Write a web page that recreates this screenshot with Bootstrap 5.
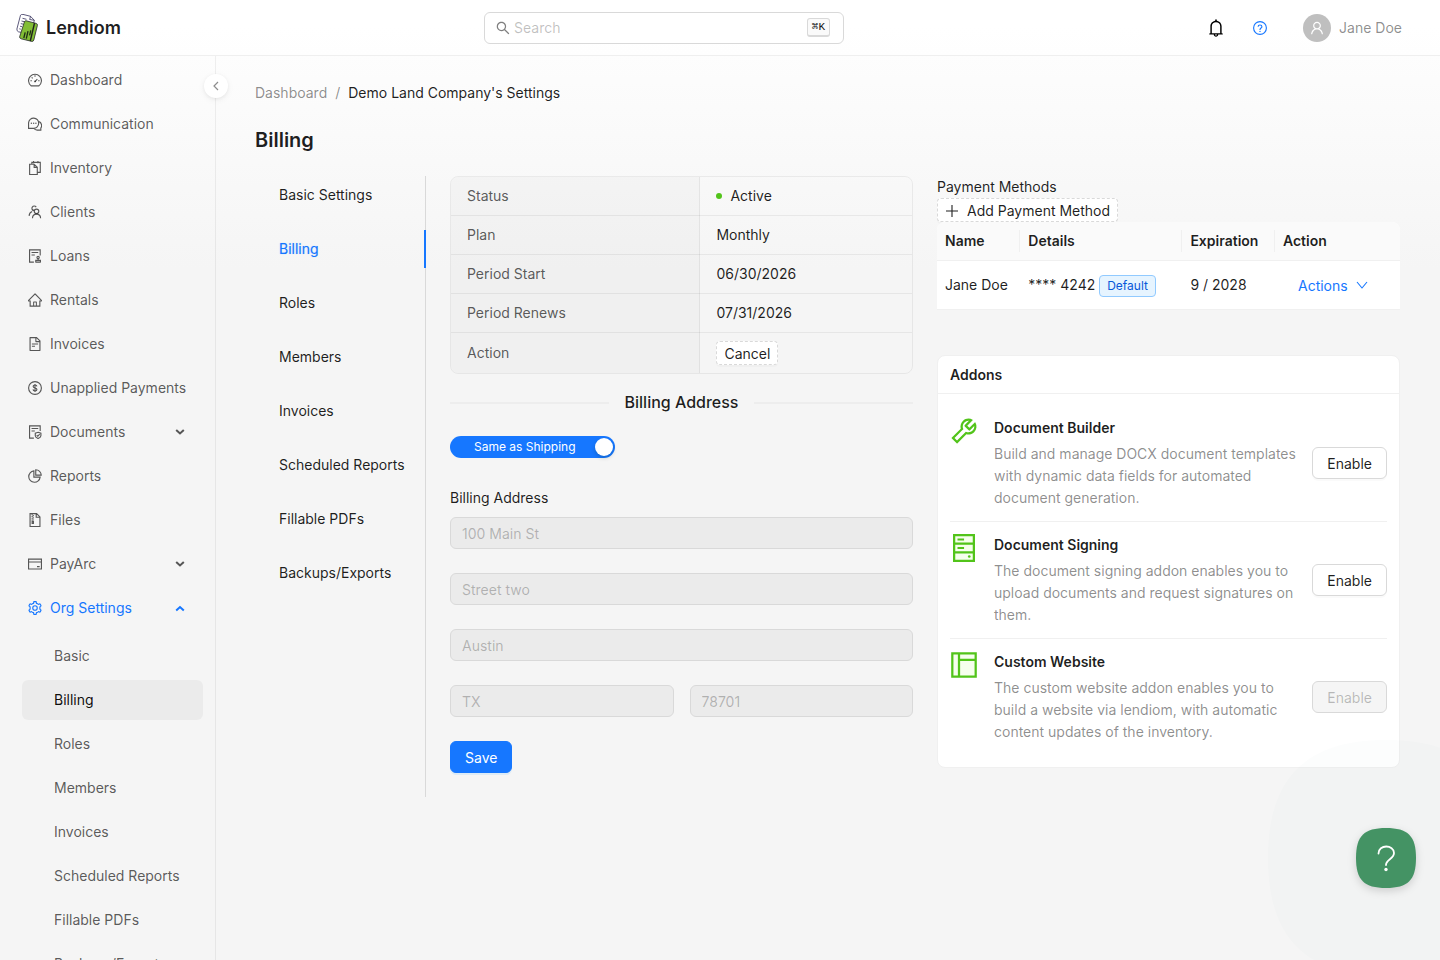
<!DOCTYPE html>
<html lang="en">
<head>
<meta charset="utf-8">
<meta name="viewport" content="width=device-width, initial-scale=1">
<title>Billing - Lendiom</title>
<link href="https://cdn.jsdelivr.net/npm/bootstrap@5.3.0/dist/css/bootstrap.min.css" rel="stylesheet">
<style>
  :root { --ink: rgba(0,0,0,.88); --ink-2: rgba(0,0,0,.65); --ink-3: rgba(0,0,0,.45); --ink-4: rgba(0,0,0,.25); --blue: #1677ff; --green: #52c41a; --line: rgba(5,5,5,.06); }
  body { font-family: Inter, "Liberation Sans", sans-serif; font-size: 14px; line-height: 22px; color: var(--ink); background: linear-gradient(#fff, #f5f5f5 28%); }
  a { text-decoration: none; color: inherit; }
  .ico { width: 14px; height: 14px; fill: currentColor; flex: none; display: block; }
  .ico-lg { width: 18px; height: 18px; }
  .ico-md { width: 12px; height: 12px; }
  .ico-sm { width: 10px; height: 10px; }
  .ln { fill: none; stroke: currentColor; stroke-width: 72; }
  .topbar { height: 56px; padding: 0 38px 0 16px; border-bottom: 1px solid var(--line); background: rgba(255,255,255,.6); }
  .brand { font-size: 18px; font-weight: 600; line-height: 28px; }
  .searchbox { width: 360px; height: 32px; padding: 0 13px 0 11px; background: #fff; border: 1px solid #d9d9d9; border-radius: 6px; }
  .searchbox .ico { color: rgba(0,0,0,.5); }
  .searchbox input { border: 0; outline: 0; background: none; min-width: 0; }
  .searchbox input::placeholder { color: var(--ink-4); }
  .keys { font: 400 11px/16px "Liberation Mono", "DejaVu Sans Mono", monospace; color: #111; background: #fafafa; border: 1px solid #d9d9d9; border-bottom-width: 2px; border-radius: 3px; padding: 0 4px; }
  .iconbtn { border: 0; background: none; padding: 0; }
  .help { color: var(--blue); }
  .who { color: var(--ink-3); }
  .avatar { width: 28px; height: 28px; background: #bfbfbf; color: #fff; }
  .shell { min-height: 0; }
  .side { width: 215px; }
  .collapser { right: -13px; top: 18px; width: 24px; height: 24px; background: #fff; color: var(--ink-3); box-shadow: 0 2px 8px -2px rgba(0,0,0,.1), 0 1px 4px -1px rgba(25,15,15,.08); }
  .menu { padding-top: 4px; color: var(--ink-2); white-space: nowrap; }
  .menu-row { height: 40px; margin-bottom: 4px; padding: 0 30px 0 28px; }
  .menu-row.on { color: var(--blue); }
  .submenu { padding-top: 4px; }
  .submenu a { height: 40px; line-height: 40px; margin: 0 12px 4px 22px; padding-left: 32px; border-radius: 6px; }
  .submenu a.on { background: rgba(0,0,0,.04); color: rgba(0,0,0,.95); }
  .page { border-left: 1px solid var(--line); padding: 26px 40px 24px 39px; }
  .crumbs { color: var(--ink-3); }
  .crumbs [aria-current] { color: var(--ink); }
  .title { font-size: 20px; line-height: 32px; font-weight: 600; margin: 20px 0; }
  .tabs { width: 171px; border-right: 1px solid #d9d9d9; gap: 16px; }
  .tabs a { padding: 8px 0 8px 24px; white-space: nowrap; }
  .tabs a.on { color: var(--blue); text-shadow: 0 0 1px rgba(22,119,255,.4); margin-right: -1px; border-right: 2px solid var(--blue); }
  .pair { display: grid; grid-template-columns: 1fr 1fr; gap: 24px; }
  .frame { border: 1px solid var(--line); border-radius: 8px; overflow: hidden; }
  .facts, .pay { --bs-table-bg: transparent; color: var(--ink); border-color: var(--line); margin: 0; }
  .facts > tbody > tr > * { padding: 8px 16px; }
  .facts > tbody > tr:last-child > * { border-bottom: 0; }
  .facts > tbody > tr > th { width: 54%; font-weight: 400; color: var(--ink-2); background: rgba(0,0,0,.02); border-right: 1px solid var(--line); }
  .dot { width: 6px; height: 6px; background: var(--green); }
  .bt { font-size: 14px; line-height: 22px; height: 32px; padding: 5px 14px 3px; border: 1px solid #d9d9d9; border-radius: 6px; background: #fff; color: var(--ink); box-shadow: 0 2px 0 rgba(0,0,0,.02); }
  .bt:disabled { background: rgba(0,0,0,.04); color: var(--ink-4); border-color: #d9d9d9; opacity: 1; box-shadow: none; }
  .bt-dash { height: 24px; padding: 1px 7px 0; border-style: dashed; border-radius: 4px; }
  .bt-main { background: var(--blue); border-color: var(--blue); color: #fff; box-shadow: 0 2px 0 rgba(5,145,255,.1); }
  .bt-link { background: none; border-color: transparent; color: var(--blue); box-shadow: none; }
  .split { margin: 16px 0; font-size: 16px; font-weight: 500; line-height: 24px; }
  .split::before, .split::after { content: ""; flex: 1; border-top: 2px solid rgba(5,5,5,.03); margin-top: 2px; }
  .switch { width: fit-content; height: 22px; padding: 0 2px 0 24px; gap: 19px; font-size: 12px; background: var(--blue); color: #fff; cursor: pointer; margin: 22px 0 29px; }
  .switch input { appearance: none; width: 18px; height: 18px; margin: 0; border-radius: 50%; background: #fff; box-shadow: 0 2px 4px rgba(0,35,11,.2); }
  .field { height: 32px; padding: 4px 11px; font-size: 14px; line-height: 22px; border: 1px solid #d9d9d9; border-radius: 6px; }
  .field:disabled { background: rgba(0,0,0,.04); }
  .field::placeholder { color: var(--ink-4); }
  .pay { background: #fff; border-color: #f0f0f0; table-layout: fixed; }
  .pay thead { background: #fafafa; }
  .pay thead th { font-weight: 600; position: relative; }
  .pay thead th:not(:last-child)::after { content: ""; position: absolute; right: 0; top: 8px; height: 22px; width: 1px; background: #f0f0f0; }
  .pay tr > * { padding: 8px; vertical-align: middle; }
  .c-name { width: 18%; } .c-details { width: 35%; } .c-exp { width: 20%; }
  .paywrap { border-radius: 8px 8px 0 0; overflow: hidden; margin-bottom: 45px; }
  .tagd { font-size: 12px; line-height: 20px; padding: 0 7px; border: 1px solid #91caff; border-radius: 4px; background: #e6f4ff; color: #0958d9; display: inline-block; }
  .panel { background: #fff; border: 1px solid #f0f0f0; border-radius: 8px; }
  .panel-head { height: 38px; line-height: 38px; padding: 0 12px; font-size: 14px; font-weight: 600; border-bottom: 1px solid #f0f0f0; margin: 0; }
  .panel-list { padding: 11px 12px 12px; margin: 0; }
  .addon { padding: 12px 0; border-bottom: 1px solid #f0f0f0; }
  .addon:last-child { border-bottom: 0; }
  .addon h3 { font-size: 14px; line-height: 22px; font-weight: 600; margin: 0 0 4px; }
  .addon p { color: var(--ink-3); margin: 0; }
  .addon svg { width: 28px; height: 28px; fill: var(--green); flex: none; align-self: flex-start; }
  .addon .duo { fill: #f6ffed; stroke: var(--green); stroke-width: 72; }
  .helper { right: 24px; bottom: 72px; width: 60px; height: 60px; border: 0; background: none; padding: 0; }
  .helper svg { width: 60px; height: 60px; overflow: visible; display: block; }
  .helper .blob { filter: drop-shadow(0 3px 4px rgba(0,0,0,.15)); }
</style>
</head>
<body class="vh-100 d-flex flex-column overflow-hidden">
<svg width="0" height="0" class="position-absolute" aria-hidden="true">
  <symbol id="chev" viewBox="0 0 10 10"><path d="M1.200 3L5 6.500 8.800 3" fill="none" stroke="currentColor" stroke-width="2"/></symbol>
  <symbol id="person" viewBox="64 64 896 896"><path d="M858.500 763.600a374 374 0 00-80.600-119.500 375.630 375.630 0 00-119.500-80.600c-.4-.2-.8-.3-1.200-.5C719.500 518 760 444.700 760 362c0-137-111-248-248-248S264 225 264 362c0 82.700 40.500 156 102.800 201.100-.4.2-.8.3-1.200.5-44.800 18.900-85 46-119.500 80.600a375.630 375.630 0 00-80.600 119.500A371.700 371.700 0 00136 901.800a8 8 0 008 8.200h60c4.400 0 7.900-3.500 8-7.800 2-77.200 33-149.500 87.800-204.300 56.700-56.700 132-87.900 212.200-87.900s155.500 31.200 212.200 87.900C779 752.700 810 825 812 902.200c.1 4.400 3.600 7.800 8 7.800h60a8 8 0 008-8.200c-1-47.800-10.900-94.300-29.500-138.200zM512 534c-45.900 0-89.100-17.900-121.600-50.400S340 407.900 340 362c0-45.900 17.900-89.100 50.400-121.600S466.100 190 512 190s89.100 17.900 121.600 50.400S684 316.100 684 362c0 45.900-17.900 89.100-50.400 121.600S557.900 534 512 534z"/></symbol>
</svg>

<header class="topbar d-flex align-items-center justify-content-between flex-shrink-0">
  <a href="#" class="d-flex align-items-center gap-2">
    <svg width="22" height="28" viewBox="0 0 22 28" aria-hidden="true">
      <path d="M4.500 1.200q1-1.200 2.500-.8L14.500 2.300l3.800 4-3.500 14.200L2.500 17.800Q.6 17 .9 15z" fill="#fff" stroke="#34305a" stroke-width=".8"/>
      <path d="M14.500 2.300l-.8 3.200 4.600.8M6.500 4.300l4 1M5.500 7l5 1.200M4.800 9.600l2.500.6M4 12.200l2 .5M3.300 14.800l1.500.4" fill="none" stroke="#34305a" stroke-width=".8"/>
      <path d="M8.500 7.600q.5-1 1.700-.8l10 2.600q1.500.5 1.200 2L17.800 26q-.4 1.600-2 1.400L5.100 24.800q-1.800-.6-1.400-2.200z" fill="#82bd35" stroke="#25242c" stroke-width=".8"/>
      <path d="M18.500 9.200L14.300 27" stroke="#1d1f1c" stroke-width="1.400"/>
      <path d="M9.200 18.300L7.800 24M12 17.200l-1.700 7.400M14.800 16.400l-1.200 5" stroke="#1d2b14" stroke-width="1.300"/>
    </svg>
    <span class="brand">Lendiom</span>
  </a>
  <div class="searchbox d-flex align-items-center" role="search">
    <svg class="ico me-1" viewBox="64 64 896 896" aria-hidden="true"><path d="M909.600 854.500L649.900 594.800C690.200 542.700 712 479 712 412c0-80.200-31.300-155.400-87.900-212.100-56.600-56.700-132-87.900-212.100-87.900s-155.500 31.300-212.100 87.900C143.200 256.500 112 331.800 112 412c0 80.100 31.300 155.500 87.900 212.100C256.500 680.800 331.800 712 412 712c67 0 130.600-21.800 182.700-62l259.700 259.600a8.200 8.200 0 0011.600 0l43.600-43.500a8.200 8.200 0 000-11.600zM570.400 570.400C528 612.700 471.800 636 412 636s-116-23.300-158.400-65.600C211.300 528 188 471.800 188 412s23.300-116.100 65.600-158.400C296 211.300 352.200 188 412 188s116.100 23.200 158.400 65.600S636 352.200 636 412s-23.300 116.100-65.600 158.400z"/></svg>
    <input class="flex-grow-1 p-0" type="search" placeholder="Search" aria-label="Search">
    <kbd class="keys">⌘K</kbd>
  </div>
  <div class="d-flex align-items-center">
    <button class="iconbtn" aria-label="Notifications" type="button"><svg class="ico ico-lg" viewBox="64 64 896 896"><path d="M816 768h-24V428c0-141.100-104.300-257.700-240-277.100V112c0-22.100-17.900-40-40-40s-40 17.900-40 40v38.900c-135.700 19.400-240 136-240 277.100v340h-24c-17.700 0-32 14.300-32 32v32c0 4.400 3.600 8 8 8h216c0 61.800 50.200 112 112 112s112-50.200 112-112h216c4.400 0 8-3.600 8-8v-32c0-17.700-14.300-32-32-32zM512 888c-26.500 0-48-21.500-48-48h96c0 26.500-21.500 48-48 48zM304 768V428c0-55.600 21.600-107.800 60.900-147.100S456.400 220 512 220c55.600 0 107.800 21.600 147.100 60.900S720 372.400 720 428v340H304z"/></svg></button>
    <button class="iconbtn help mx-4 px-1" aria-label="Help" type="button"><svg class="ico" viewBox="64 64 896 896"><circle class="ln" cx="512" cy="512" r="410"/><path class="ln" d="M390 430c0-150 244-150 244 0 0 90-122 80-122 190v20"/><circle cx="512" cy="730" r="42"/></svg></button>
    <a href="#" class="who d-flex align-items-center ms-2"><span class="avatar rounded-circle d-flex align-items-center justify-content-center me-2"><svg class="ico"><use href="#person"/></svg></span>Jane Doe</a>
  </div>
</header>

<div class="shell d-flex flex-grow-1">
  <aside class="side position-relative flex-shrink-0">
    <button type="button" class="collapser iconbtn rounded-circle position-absolute d-flex align-items-center justify-content-center z-1" aria-label="Collapse menu"><svg width="12" height="12" viewBox="0 0 12 12"><path d="M8 2L4 6l4 4" fill="none" stroke="currentColor" stroke-width="1.200"/></svg></button>
    <nav class="menu h-100 overflow-hidden" aria-label="Main">
      <a href="#" class="menu-row d-flex align-items-center gap-2"><svg class="ico" viewBox="64 64 896 896"><path class="ln" d="M262 884a412 412 0 1 1 500 0z"/><path class="ln" d="M512 610l150-160M512 210v90M220 560h90M714 560h90M300 350l60 60"/><circle cx="512" cy="600" r="56"/></svg>Dashboard</a>
      <a href="#" class="menu-row d-flex align-items-center gap-2"><svg class="ico" viewBox="64 64 896 896"><path class="ln" d="M100 790V440a325 325 0 1 1 325 345zM775 350c170 90 200 300 110 420v130H650c-80 0-160-40-210-100"/><circle cx="280" cy="460" r="46"/><circle cx="425" cy="460" r="46"/><circle cx="570" cy="460" r="46"/></svg>Communication</a>
      <a href="#" class="menu-row d-flex align-items-center gap-2"><svg class="ico" viewBox="64 64 896 896"><path class="ln" d="M168 268h290l200 200v456H168zM458 268v200h200M310 250V148h540v640H690M420 64v150M700 64v150"/></svg>Inventory</a>
      <a href="#" class="menu-row d-flex align-items-center gap-2"><svg class="ico" viewBox="64 64 896 896"><circle class="ln" cx="610" cy="470" r="145"/><path class="ln" d="M350 910c10-350 510-350 520 0M455 390c-80-20-145 10-145 10M440 430a150 150 0 1 1 150-230M330 480c-110 40-190 150-195 280"/></svg>Clients</a>
      <a href="#" class="menu-row d-flex align-items-center gap-2"><svg class="ico" viewBox="64 64 896 896"><path class="ln" d="M440 904H164V120h680v360M290 290h430M290 450h210M540 904h340M560 904V790h300v114M710 790V690"/><circle class="ln" cx="710" cy="610" r="75"/></svg>Loans</a>
      <a href="#" class="menu-row d-flex align-items-center gap-2"><svg class="ico" viewBox="64 64 896 896"><path d="M946.500 505L560.100 118.800l-25.900-25.900a31.500 31.500 0 00-44.400 0L77.500 505a63.900 63.900 0 00-18.800 46c.4 35.200 29.700 63.300 64.900 63.300h42.500V940h691.800V614.300h43.400c17.100 0 33.200-6.700 45.300-18.800a63.600 63.600 0 0018.700-45.300c0-17-6.700-33.100-18.800-45.200zM568 868H456V664h112v204zm217.900-325.700V868H632V640c0-22.100-17.900-40-40-40H432c-22.100 0-40 17.900-40 40v228H238.100V542.300h-96l370-369.700 23.100 23.100L882 542.300h-96.100z"/></svg>Rentals</a>
      <a href="#" class="menu-row d-flex align-items-center gap-2"><svg class="ico" viewBox="64 64 896 896"><path d="M854.600 288.600L639.400 73.400c-6-6-14.100-9.400-22.600-9.400H192c-17.700 0-32 14.300-32 32v832c0 17.700 14.300 32 32 32h640c17.700 0 32-14.300 32-32V311.300c0-8.500-3.400-16.700-9.400-22.700zM790.200 326H602V137.800L790.200 326zm1.800 562H232V136h302v216a42 42 0 0042 42h216v494zM504 618H320c-4.400 0-8 3.600-8 8v48c0 4.400 3.600 8 8 8h184c4.400 0 8-3.600 8-8v-48c0-4.400-3.600-8-8-8zM312 490v48c0 4.400 3.600 8 8 8h384c4.400 0 8-3.600 8-8v-48c0-4.400-3.600-8-8-8H320c-4.400 0-8 3.600-8 8z"/></svg>Invoices</a>
      <a href="#" class="menu-row d-flex align-items-center gap-2"><svg class="ico" viewBox="64 64 896 896"><circle class="ln" cx="512" cy="512" r="410"/><path class="ln" d="M635 410c-20-130-246-120-240 0 6 140 240 60 240 200 0 120-240 130-250-10M512 250v524"/></svg>Unapplied Payments</a>
      <a href="#" class="menu-row d-flex align-items-center gap-2"><svg class="ico" viewBox="64 64 896 896"><path class="ln" d="M440 904H164V120h680v320M290 290h430M290 450h210M710 530l180 60v160c0 90-100 150-180 180-80-30-180-90-180-180V590zM620 715l70 70 120-130"/></svg><span class="flex-grow-1">Documents</span><svg class="ico ico-sm"><use href="#chev"/></svg></a>
      <a href="#" class="menu-row d-flex align-items-center gap-2"><svg class="ico" viewBox="64 64 896 896"><path class="ln" d="M440 185a365 365 0 1 0 400 400H440zM560 110v345h350A350 350 0 0 0 560 110z"/></svg>Reports</a>
      <a href="#" class="menu-row d-flex align-items-center gap-2"><svg class="ico" viewBox="64 64 896 896"><path class="ln" d="M196 100h420l212 212v612H196zM590 100v238h238"/><path class="ln" stroke-dasharray="64 48" d="M330 140v400M400 196v344"/><path class="ln" d="M330 600h80v130h-80z"/></svg>Files</a>
      <a href="#" class="menu-row d-flex align-items-center gap-2"><svg class="ico" viewBox="64 64 896 896"><path class="ln" d="M100 196h824v632H100zM100 380h824M640 680h170"/></svg><span class="flex-grow-1">PayArc</span><svg class="ico ico-sm"><use href="#chev"/></svg></a>
      <a href="#" class="menu-row on d-flex align-items-center gap-2" aria-expanded="true"><svg class="ico" viewBox="64 64 896 896"><path d="M924.800 625.700l-65.500-56c3.100-19 4.700-38.400 4.700-57.800s-1.600-38.800-4.700-57.800l65.500-56a32.030 32.030 0 009.300-35.200l-.9-2.600a443.740 443.740 0 00-79.700-137.900l-1.800-2.100a32.120 32.120 0 00-35.100-9.500l-81.300 28.900c-30-24.600-63.500-44-99.700-57.600l-15.700-85a32.050 32.050 0 00-25.800-25.700l-2.700-.5c-52.100-9.400-106.900-9.400-159 0l-2.700.5a32.050 32.050 0 00-25.800 25.700l-15.800 85.400a351.860 351.860 0 00-99 57.400l-81.900-29.100a32 32 0 00-35.100 9.500l-1.800 2.100a446.020 446.020 0 00-79.700 137.900l-.9 2.600c-4.500 12.500-.8 26.500 9.300 35.200l66.300 56.600c-3.100 18.800-4.600 38-4.600 57.100 0 19.200 1.500 38.400 4.600 57.100L99 625.500a32.030 32.030 0 00-9.300 35.200l.9 2.600c18.100 50.400 44.900 96.900 79.700 137.900l1.800 2.100a32.120 32.120 0 0035.100 9.500l81.900-29.100c29.800 24.500 63.100 43.900 99 57.400l15.800 85.400a32.050 32.050 0 0025.800 25.700l2.700.5a449.400 449.400 0 00159 0l2.700-.5a32.050 32.050 0 0025.800-25.700l15.700-85a350 350 0 0099.700-57.600l81.300 28.900a32 32 0 0035.100-9.500l1.800-2.100c34.800-41.100 61.600-87.500 79.700-137.900l.9-2.600c4.500-12.300.8-26.300-9.300-35zM788.300 465.900c2.500 15.100 3.800 30.600 3.800 46.100s-1.300 31-3.800 46.100l-6.600 40.100 74.700 63.900a370.030 370.030 0 01-42.600 73.600L721 702.800l-31.400 25.800c-23.900 19.600-50.500 35-79.300 45.800l-38.100 14.300-17.900 97a377.500 377.500 0 01-85 0l-17.900-97.200-37.800-14.500c-28.500-10.800-55-26.200-78.700-45.700l-31.400-25.900-93.400 33.200c-17-22.900-31.200-47.600-42.600-73.600l75.500-64.500-6.500-40c-2.400-14.900-3.700-30.300-3.700-45.500 0-15.300 1.200-30.600 3.700-45.500l6.500-40-75.500-64.500c11.300-26.100 25.600-50.700 42.600-73.600l93.400 33.200 31.400-25.900c23.700-19.500 50.200-34.900 78.700-45.700l37.900-14.300 17.900-97.200c28.100-3.200 56.800-3.200 85 0l17.900 97 38.100 14.300c28.700 10.800 55.400 26.200 79.300 45.800l31.400 25.800 92.800-32.900c17 22.900 31.200 47.600 42.600 73.600L781.800 426l6.500 39.900z"/><circle class="ln" cx="512" cy="512" r="144"/></svg><span class="flex-grow-1">Org Settings</span><svg class="ico ico-sm" viewBox="0 0 10 10"><path d="M1.200 7.500L5 4l3.800 3.500" fill="none" stroke="currentColor" stroke-width="2"/></svg></a>
      <div class="submenu d-flex flex-column">
        <a href="#">Basic</a>
        <a href="#" class="on" aria-current="page">Billing</a>
        <a href="#">Roles</a>
        <a href="#">Members</a>
        <a href="#">Invoices</a>
        <a href="#">Scheduled Reports</a>
        <a href="#">Fillable PDFs</a>
        <a href="#">Backups/Exports</a>
      </div>
    </nav>
  </aside>

  <main class="page flex-grow-1 overflow-auto">
    <nav class="crumbs d-flex gap-2" aria-label="Breadcrumb"><a href="#">Dashboard</a><span>/</span><span aria-current="page">Demo Land Company's Settings</span></nav>
    <h1 class="title">Billing</h1>
    <div class="d-flex gap-4">
      <nav class="tabs d-flex flex-column flex-shrink-0" aria-label="Settings">
        <a href="#">Basic Settings</a>
        <a href="#" class="on">Billing</a>
        <a href="#">Roles</a>
        <a href="#">Members</a>
        <a href="#">Invoices</a>
        <a href="#">Scheduled Reports</a>
        <a href="#">Fillable PDFs</a>
        <a href="#">Backups/Exports</a>
      </nav>
      <div class="pair flex-grow-1">
        <section class="pb-4">
          <div class="frame">
            <table class="table facts">
              <tbody>
                <tr><th scope="row">Status</th><td><span class="d-flex align-items-center gap-2"><span class="dot rounded-circle"></span>Active</span></td></tr>
                <tr><th scope="row">Plan</th><td>Monthly</td></tr>
                <tr><th scope="row">Period Start</th><td>06/30/2026</td></tr>
                <tr><th scope="row">Period Renews</th><td>07/31/2026</td></tr>
                <tr><th scope="row" class="align-middle">Action</th><td><button type="button" class="btn bt bt-dash d-block">Cancel</button></td></tr>
              </tbody>
            </table>
          </div>
          <h2 class="split d-flex align-items-center gap-3">Billing Address</h2>
          <form>
            <label class="switch d-flex align-items-center rounded-pill">Same as Shipping<input type="checkbox" role="switch" checked></label>
            <label for="street" class="d-block mb-2">Billing Address</label>
            <div class="d-flex flex-column gap-4">
              <input id="street" class="form-control field" placeholder="100 Main St" disabled>
              <input class="form-control field" placeholder="Street two" aria-label="Street two" disabled>
              <input class="form-control field" placeholder="Austin" aria-label="City" disabled>
              <div class="d-flex gap-3">
                <input class="form-control field" placeholder="TX" aria-label="State" disabled>
                <input class="form-control field" placeholder="78701" aria-label="Postal code" disabled>
              </div>
              <button type="button" class="btn bt bt-main align-self-start">Save</button>
            </div>
          </form>
        </section>

        <section>
          <div>Payment Methods</div>
          <button type="button" class="btn bt bt-dash d-flex align-items-center gap-2"><svg class="ico" viewBox="0 0 14 14"><path d="M7 1v12M1 7h12" stroke="currentColor" stroke-width="1.100"/></svg>Add Payment Method</button>
          <div class="paywrap">
            <table class="table pay">
              <colgroup><col class="c-name"><col class="c-details"><col class="c-exp"><col></colgroup>
              <thead><tr><th scope="col">Name</th><th scope="col">Details</th><th scope="col">Expiration</th><th scope="col">Action</th></tr></thead>
              <tbody><tr>
                <td>Jane Doe</td>
                <td>**** 4242 <span class="tagd">Default</span></td>
                <td>9 / 2028</td>
                <td><button type="button" class="btn bt bt-link d-flex align-items-center gap-2">Actions<svg class="ico ico-md" viewBox="0 0 12 12"><path d="M1 2l5 6 5-6" fill="none" stroke="currentColor" stroke-width="1.100"/></svg></button></td>
              </tr></tbody>
            </table>
          </div>
          <div class="panel">
            <h2 class="panel-head">Addons</h2>
            <ul class="panel-list list-unstyled">
              <li class="addon d-flex align-items-center">
                <svg viewBox="64 64 896 896" aria-hidden="true"><path d="M876.600 239.500c-.5-.9-1.200-1.800-2-2.500-5-5-13.100-5-18.100 0L684.200 409.300l-67.900-67.900L788.700 169c.8-.8 1.400-1.600 2-2.500 3.600-6.100 1.600-13.900-4.500-17.500-98.200-58-226.800-44.700-311.300 39.700-67 67-89.200 162-66.500 247.400l-293 293c-3 3-2.800 7.900.3 11l169.700 169.700c3.100 3.100 8.100 3.300 11 .3l292.900-292.900c85.500 22.800 180.500.7 247.600-66.400 84.400-84.500 97.700-213.100 39.700-311.300zM786 499.800c-58.100 58.100-145.300 69.300-214.600 33.600l-8.800 8.800-.1-.1-274 274.100-79.200-79.200 230.100-230.100s0 .1.1.1l52.800-52.800c-35.700-69.300-24.500-156.500 33.600-214.600a184.200 184.200 0 01144-53.500L537 318.900a32.050 32.050 0 000 45.300l124.500 124.500a32.050 32.050 0 0045.300 0l132.800-132.800c3.700 51.800-14.400 104.800-53.600 143.900z"/></svg>
                <div class="flex-grow-1 ms-3 me-2"><h3>Document Builder</h3><p>Build and manage DOCX document templates with dynamic data fields for automated document generation.</p></div>
                <button type="button" class="btn bt">Enable</button>
              </li>
              <li class="addon d-flex align-items-center">
                <svg viewBox="64 64 896 896" aria-hidden="true"><path class="duo" d="M196 100h632v824H196zM196 370h632M196 650h632"/><path d="M304 208h210v60H304zM304 482h210v60H304z"/><circle cx="680" cy="784" r="42"/></svg>
                <div class="flex-grow-1 ms-3 me-2"><h3>Document Signing</h3><p>The document signing addon enables you to upload documents and request signatures on them.</p></div>
                <button type="button" class="btn bt">Enable</button>
              </li>
              <li class="addon d-flex align-items-center">
                <svg viewBox="64 64 896 896" aria-hidden="true"><path class="duo" d="M138 138h748v748H138zM352 138v748M352 350h534"/></svg>
                <div class="flex-grow-1 ms-3 me-2"><h3>Custom Website</h3><p>The custom website addon enables you to build a website via lendiom, with automatic content updates of the inventory.</p></div>
                <button type="button" class="btn bt" disabled>Enable</button>
              </li>
            </ul>
          </div>
        </section>
      </div>
    </div>
  </main>
</div>

<button type="button" class="helper position-fixed" aria-label="Open help">
  <svg viewBox="0 0 60 60" aria-hidden="true">
    <path d="M-88 30C-88-50-50-88 30-88S148-50 148 30 110 148 30 148-88 110-88 30z" fill="#449364" opacity=".014"/>
    <path class="blob" d="M0 30C0 8 8 0 30 0S60 8 60 30 52 60 30 60 0 52 0 30z" fill="#449364"/>
    <path d="M22.500 25.500C22.500 16 38 16.500 38 25c0 6-8 6.500-8 12" fill="none" stroke="#fff" stroke-width="1.800" stroke-linecap="round"/>
    <circle cx="30" cy="41.500" r="1.700" fill="#fff"/>
  </svg>
</button>
<script src="https://cdn.jsdelivr.net/npm/bootstrap@5.3.0/dist/js/bootstrap.bundle.min.js"></script>
</body>
</html>
